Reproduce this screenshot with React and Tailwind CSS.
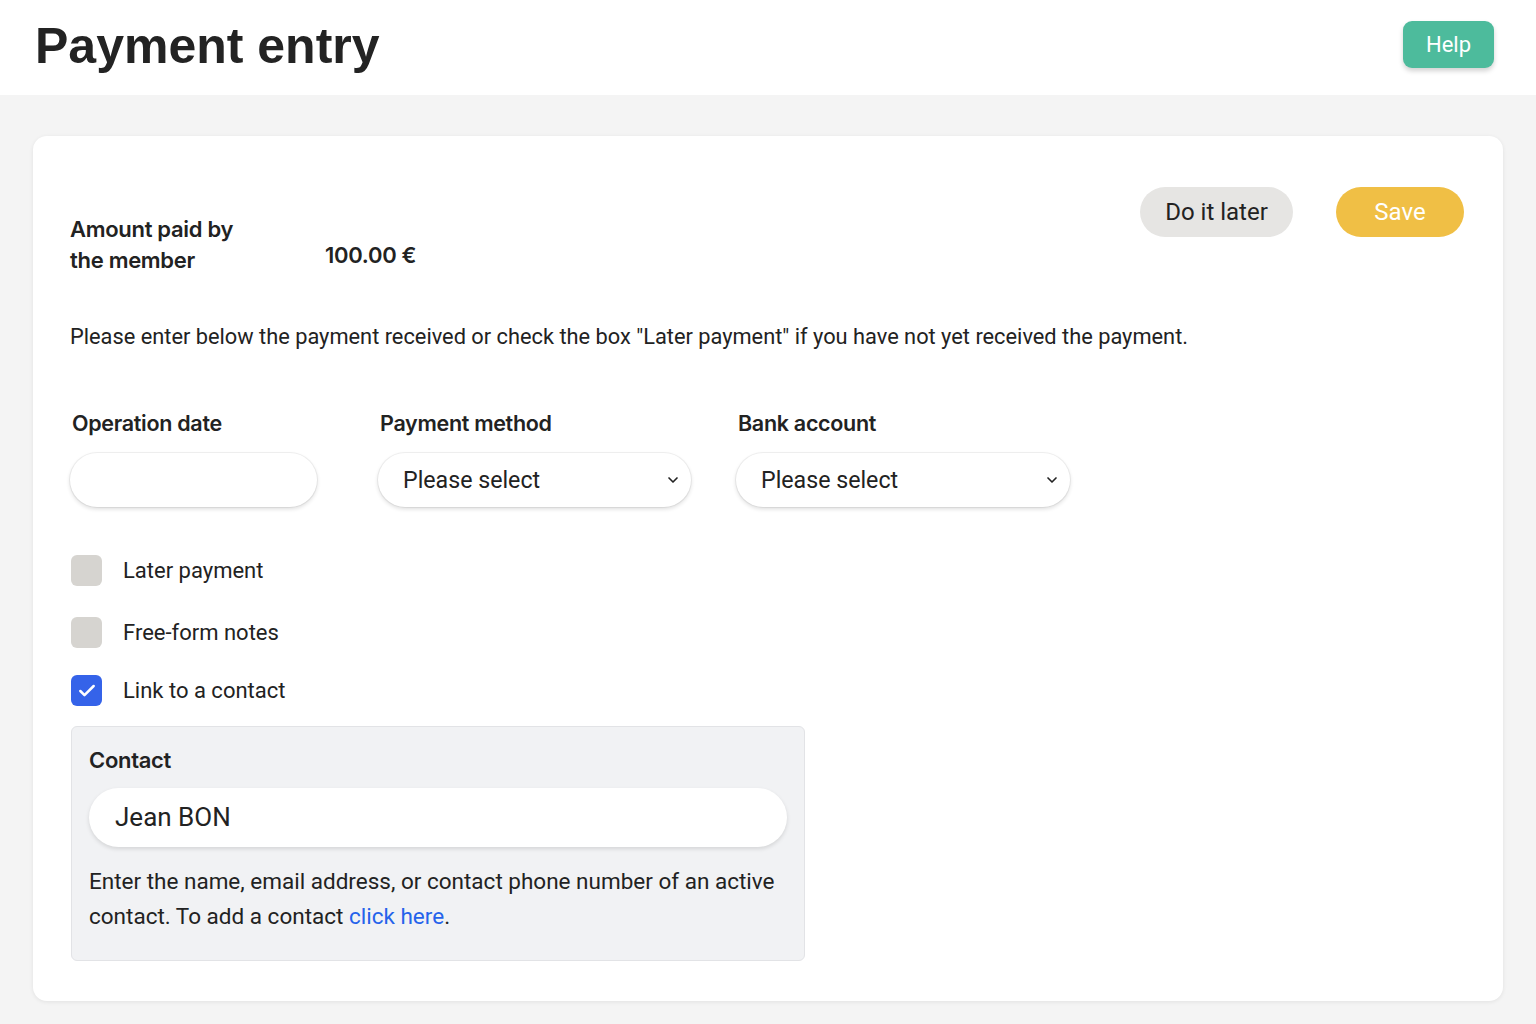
import { ChevronDown, Check } from "lucide-react";

const sans = "font-['Roboto','Liberation_Sans',sans-serif]";

function Field({ label, children, width }) {
  return (
    <div className={`flex flex-col ${width}`}>
      <label className="mb-[15px] pl-[2px] text-[21.5px] font-semibold leading-[30px] text-[#222] font-['Inter','Roboto',sans-serif] tracking-[-0.3px]">
        {label}
      </label>
      {children}
    </div>
  );
}

function SelectBox({ className }) {
  return (
    <div className={`flex h-[54px] items-center justify-between rounded-full bg-white pl-[25px] pr-[10px] shadow-[0_2px_4px_rgba(0,0,0,0.14),0_0_0_1px_rgba(0,0,0,0.05)] ${className}`}>
      <span className="text-[23.2px] text-[#222]">Please select</span>
      <ChevronDown size={16} strokeWidth={2.5} className="text-[#222]" />
    </div>
  );
}

function CheckRow({ checked, label }) {
  return (
    <div className="flex items-center gap-[21px]">
      <div
        className={`flex h-[31px] w-[31px] items-center justify-center rounded-[6px] ${
          checked ? "bg-[#3563e9]" : "bg-[#d6d4d0]"
        }`}
      >
        {checked && <Check size={20} strokeWidth={3} className="text-white" />}
      </div>
      <span className="text-[22px] leading-[31px] text-[#222]">{label}</span>
    </div>
  );
}

export default function App() {
  return (
    <div className={`min-h-[1024px] bg-[#f4f4f4] ${sans}`}>
      <header className="flex h-[95px] items-start justify-between bg-white pl-[35px] pr-[42px]">
        <h1 className="mt-[16px] font-['Liberation_Sans',sans-serif] text-[50px] font-bold leading-[60px] text-[#232323]">
          Payment entry
        </h1>
        <button className="mt-[21px] h-[47px] w-[91px] rounded-[9px] bg-[#4dbb9c] text-[22px] text-white shadow-[0_3px_5px_rgba(0,0,0,0.18)]">
          Help
        </button>
      </header>

      <main className="px-[33px] pt-[41px] pb-[24px]">
        <section className="rounded-[14px] bg-white pl-[37px] pr-[39px] pt-[51px] pb-[40px] shadow-[0_1px_4px_rgba(0,0,0,0.08)]">
          <div className="flex items-start justify-between">
            <div className="mt-[27px] flex items-start font-['Inter','Roboto',sans-serif] text-[22px] font-semibold text-[#222] tracking-[-0.3px]">
              <div className="w-[255px] leading-[31px]">
                Amount paid by
                <br />
                the member
              </div>
              <div className="mt-[26px] leading-[30px]">100.00 €</div>
            </div>
            <div className="flex gap-[43px]">
              <button className="h-[50px] w-[153px] rounded-full bg-[#e6e5e3] text-[24px] text-[#222]">
                Do it later
              </button>
              <button className="h-[50px] w-[128px] rounded-full bg-[#f0bf45] text-[24px] text-white">
                Save
              </button>
            </div>
          </div>

          <p className="mt-[46px] text-[21.8px] leading-[30px] text-[#222]">
            Please enter below the payment received or check the box "Later payment" if you have not yet received the payment.
          </p>

          <div className="mt-[56px] flex gap-[60px]">
            <Field label="Operation date" width="w-[247px]">
              <div className="h-[54px] rounded-full bg-white shadow-[0_2px_4px_rgba(0,0,0,0.14),0_0_0_1px_rgba(0,0,0,0.05)]" />
            </Field>
            <Field label="Payment method" width="w-[313px] ml-[1px]">
              <SelectBox />
            </Field>
            <Field label="Bank account" width="w-[334px] -ml-[15px]">
              <SelectBox />
            </Field>
          </div>

          <div className="mt-[48px] flex flex-col gap-[31px] pl-[1px]">
            <CheckRow label="Later payment" />
            <div className="flex flex-col gap-[27px]">
              <CheckRow label="Free-form notes" />
              <CheckRow checked label="Link to a contact" />
            </div>
          </div>

          <div className="mt-[20px] ml-[1px] w-[734px] rounded-[6px] border border-[#e2e3e6] bg-[#f1f2f4] px-[17px] pt-[18px] pb-[26px]">
            <div className="font-['Inter','Roboto',sans-serif] text-[22px] font-semibold leading-[30px] text-[#222] tracking-[-0.3px]">
              Contact
            </div>
            <div className="mt-[13px] flex h-[59px] items-center rounded-full bg-white pl-[26px] text-[26px] text-[#222] shadow-[0_2px_4px_rgba(0,0,0,0.12)]">
              Jean BON
            </div>
            <p className="mt-[17px] text-[22.5px] leading-[35px] text-[#222]">
              Enter the name, email address, or contact phone number of an active contact. To add a contact{" "}
              <span className="text-[#2563eb]">click here</span>.
            </p>
          </div>
        </section>
      </main>
    </div>
  );
}
